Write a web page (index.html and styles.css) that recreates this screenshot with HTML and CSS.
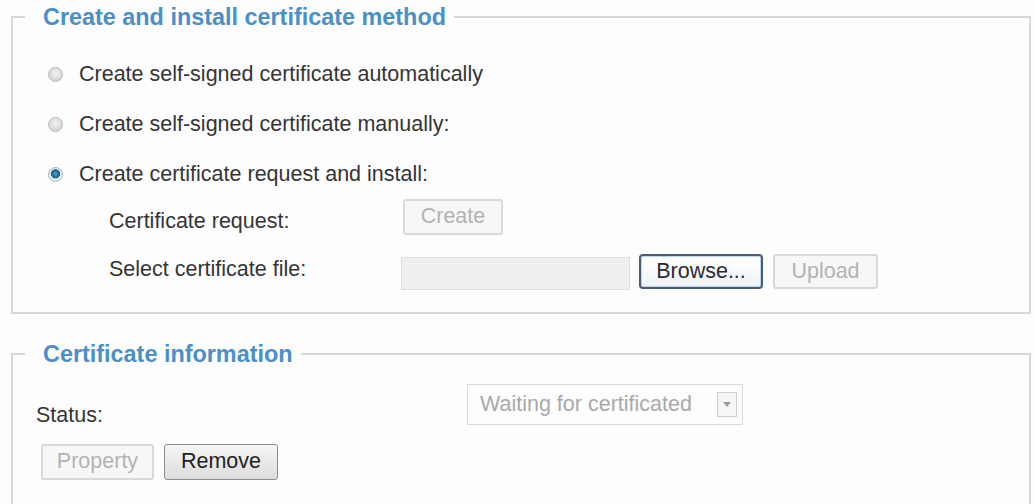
FILE: index.html
```html
<!DOCTYPE html>
<html>
<head>
<meta charset="utf-8">
<link rel="stylesheet" href="styles.css">
</head>
<body>
<div class="page">
  <fieldset class="box box-method">
    <legend>Create and install certificate method</legend>
    <div class="radio-row"><input type="radio" name="m" class="radio"><span class="label">Create self-signed certificate automatically</span></div>
    <div class="radio-row"><input type="radio" name="m" class="radio"><span class="label">Create self-signed certificate manually:</span></div>
    <div class="radio-row"><input type="radio" name="m" class="radio" checked><span class="label">Create certificate request and install:</span></div>
    <div class="sub-row sub-row-request">
      <span class="sub-label">Certificate request:</span>
      <button class="btn btn-disabled btn-create" disabled>Create</button>
    </div>
    <div class="sub-row sub-row-file">
      <span class="sub-label">Select certificate file:</span>
      <span class="file-input"></span>
      <button class="btn btn-browse">Browse...</button>
      <button class="btn btn-disabled btn-upload" disabled>Upload</button>
    </div>
  </fieldset>

  <fieldset class="box box-info">
    <legend>Certificate information</legend>
    <div class="status-row">
      <span class="status-label">Status:</span>
      <div class="select">
        <span class="select-text">Waiting for certificated</span>
        <span class="select-arrow"><svg width="8" height="5" viewBox="0 0 8 5"><path d="M0 0 L8 0 L4 5 Z" fill="#9a9a9a"/></svg></span>
      </div>
    </div>
    <div class="button-row">
      <button class="btn btn-disabled btn-property" disabled>Property</button>
      <button class="btn btn-remove">Remove</button>
    </div>
  </fieldset>
</div>
</body>
</html>
```

FILE: styles.css
```css
html, body {
  margin: 0;
  padding: 0;
  overflow: hidden;
  background: #fdfdfd;
}

body {
  font-family: "Liberation Sans", Arial, sans-serif;
  font-size: 21.5px;
  color: #353535;
}

.page {
  padding: 4px 3px 0 11px;
}

.box {
  margin: 0;
  min-width: 0;
  border: 2px solid #d8d8d8;
  padding: 19px 12px 22px 12px;
}

.box legend {
  padding: 0 8px 0 18px;
  font-weight: bold;
  font-size: 23.4px;
  line-height: 26px;
  color: #4b8fc8;
}

.radio-row {
  display: flex;
  align-items: center;
  height: 50px;
}

.radio {
  -webkit-appearance: none;
  appearance: none;
  width: 15px;
  height: 15px;
  margin: 0 16px 0 23px;
  border-radius: 50%;
  border: 1px solid #b9b9b9;
  background: radial-gradient(circle at 50% 40%, #f2f2f2 0%, #dcdcdc 55%, #c6c6c6 100%);
  box-sizing: border-box;
  flex: none;
}

.radio:checked {
  border: 1px solid #aab4bc;
  background: radial-gradient(circle at 50% 45%, #4fa3d1 0%, #1d6d9c 34%, #175a82 44%, #dfe6ec 50%, #eef2f5 75%, #c8d0d6 100%);
}

.label, .sub-label, .status-label {
  line-height: 25px;
  white-space: nowrap;
}

.sub-row {
  display: flex;
  align-items: flex-start;
  padding-left: 84px;
}

.sub-label {
  width: 292px;
  flex: none;
}

.sub-row-request {
  height: 54px;
}

.sub-row-request .sub-label {
  margin-top: 10px;
}

.btn-create {
  margin-left: 2px;
  width: 100px;
  height: 36px;
}

.sub-row-file {
  height: 37px;
}

.sub-row-file .sub-label {
  margin-top: 4px;
}

.file-input {
  display: block;
  margin-top: 4px;
  width: 229px;
  height: 33px;
  box-sizing: border-box;
  background: #efefef;
  border: 1px solid #dedede;
  flex: none;
}

.btn {
  font-family: "Liberation Sans", Arial, sans-serif;
  font-size: 21.5px;
  box-sizing: border-box;
  padding: 0;
  border-radius: 3px;
  flex: none;
  line-height: 1;
}

.btn-disabled {
  color: #b3b3b3;
  background: #f7f7f7;
  border: 2px solid #d9d9d9;
}

.btn-browse {
  margin: 1px 0 0 9px;
  width: 124px;
  height: 35px;
  color: #2e2a33;
  border: 2px solid #4a5d70;
  border-radius: 4px;
  background: linear-gradient(#ffffff, #eef3f7);
  box-shadow: inset 0 0 0 1px #b8d6ee;
}

.btn-upload {
  margin: 1px 0 0 10px;
  width: 105px;
  height: 35px;
}

.box-info {
  margin-top: 27px;
  padding: 17px 12px 24px 12px;
}

.status-row {
  display: flex;
  align-items: flex-start;
  height: 41px;
}

.status-label {
  margin: 19px 0 0 11px;
  width: 431px;
  flex: none;
}

.select {
  display: flex;
  align-items: center;
  justify-content: space-between;
  width: 276px;
  height: 41px;
  box-sizing: border-box;
  border: 1px solid #dadada;
  background: #fdfdfd;
  padding: 0 5px 0 12px;
}

.select-text {
  color: #a9a9a9;
  white-space: nowrap;
}

.select-arrow {
  display: flex;
  align-items: center;
  justify-content: center;
  width: 20px;
  height: 25px;
  box-sizing: border-box;
  border: 1px solid #cfcfcf;
  background: #f6f6f6;
}

.button-row {
  display: flex;
  gap: 10px;
  margin: 19px 0 0 16px;
}

.btn-property {
  width: 113px;
  height: 36px;
}

.btn-remove {
  width: 114px;
  height: 36px;
  color: #222;
  border: 1px solid #8c8c8c;
  background: linear-gradient(#f6f6f6, #dcdcdc);
}
```
